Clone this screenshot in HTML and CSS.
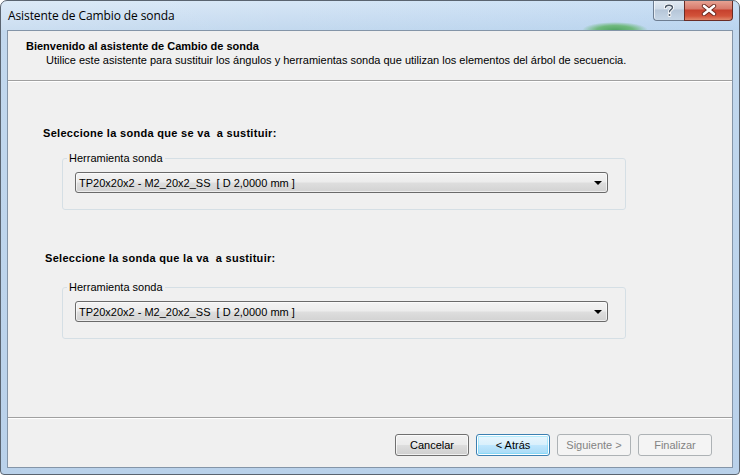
FILE: index.html
```html
<!DOCTYPE html>
<html lang="es">
<head>
<meta charset="utf-8">
<title>Asistente de Cambio de sonda</title>
<link rel="stylesheet" href="styles.css">
</head>
<body>
<div class="window">
  <div class="titlebar">
    <div class="title">Asistente de Cambio de sonda</div>
    <div class="hill"></div>
    <div class="caption-buttons">
      <div class="cap-btn help">
        <svg width="12" height="14" viewBox="0 0 12 14">
          <path d="M2.5 4.5 C2.5 1.5 9.5 1.5 9.5 4.5 C9.5 6.5 6.5 6.8 6.5 8.8" fill="none" stroke="#ffffff" stroke-width="3.2" stroke-linecap="round"/>
          <path d="M2.5 4.5 C2.5 1.5 9.5 1.5 9.5 4.5 C9.5 6.5 6.5 6.8 6.5 8.8" fill="none" stroke="#4b5867" stroke-width="1.4" stroke-linecap="round"/>
          <circle cx="6.5" cy="12" r="1.9" fill="#ffffff"/>
          <circle cx="6.5" cy="12" r="1" fill="#4b5867"/>
        </svg>
      </div>
      <div class="cap-btn close">
        <svg width="16" height="12" viewBox="0 0 16 12">
          <path d="M3 2 L13 10 M13 2 L3 10" stroke="#6b2a20" stroke-width="4.4" stroke-linecap="round"/>
          <path d="M3 2 L13 10 M13 2 L3 10" stroke="#ffffff" stroke-width="2.6" stroke-linecap="round"/>
        </svg>
      </div>
    </div>
  </div>
  <div class="client">
    <div class="header">
      <div class="header-title">Bienvenido al asistente de Cambio de sonda</div>
      <div class="header-sub">Utilice este asistente para sustituir los ángulos y herramientas sonda que utilizan los elementos del árbol de secuencia.</div>
    </div>
    <div class="separator"></div>
    <div class="body">
      <div class="prompt prompt-1">Seleccione la sonda que se va &nbsp;a sustituir:</div>
      <fieldset class="group group-1">
        <legend>Herramienta sonda</legend>
        <div class="combo">
          <span class="combo-text">TP20x20x2 - M2_20x2_SS&nbsp; [ D 2,0000 mm ]</span>
          <span class="combo-arrow"></span>
        </div>
      </fieldset>
      <div class="prompt prompt-2">Seleccione la sonda que la va &nbsp;a sustituir:</div>
      <fieldset class="group group-2">
        <legend>Herramienta sonda</legend>
        <div class="combo">
          <span class="combo-text">TP20x20x2 - M2_20x2_SS&nbsp; [ D 2,0000 mm ]</span>
          <span class="combo-arrow"></span>
        </div>
      </fieldset>
    </div>
    <div class="separator"></div>
    <div class="footer">
      <button class="btn">Cancelar</button>
      <button class="btn default">&lt; Atrás</button>
      <button class="btn" disabled>Siguiente &gt;</button>
      <button class="btn" disabled>Finalizar</button>
    </div>
  </div>
</div>
</body>
</html>
```

FILE: styles.css
```css
* { box-sizing: border-box; }
html, body {
  margin: 0;
  padding: 0;
  width: 740px;
  height: 475px;
  background: #ffffff;
  overflow: hidden;
}
body {
  font-family: "Liberation Sans", Arial, sans-serif;
  font-size: 11px;
  color: #000000;
}
.window {
  width: 740px;
  height: 475px;
  border: 1px solid #5a6470;
  border-radius: 7px 7px 4px 4px;
  background: linear-gradient(to bottom, #d6e6f6 0px, #c2d8ee 30px, #b9d1ea 100%);
  display: flex;
  flex-direction: column;
  overflow: hidden;
}
.titlebar {
  height: 29px;
  display: flex;
  align-items: flex-start;
  padding-left: 7px;
  background: linear-gradient(to right, rgba(255,255,255,0.15) 0%, rgba(255,255,255,0) 40%, rgba(160,200,240,0.25) 100%);
}
.title {
  font-family: "Open Sans", "Noto Sans", sans-serif;
  font-size: 12px;
  line-height: 16px;
  margin-top: 7px;
  color: #000000;
  letter-spacing: -0.1px;
}
.hill {
  width: 66px;
  height: 8px;
  margin: 21px 5px 0 auto;
  align-self: flex-start;
  border-radius: 50% 50% 0 0 / 100% 100% 0 0;
  background: radial-gradient(ellipse 50% 100% at 50% 100%, #3f9e4c 0%, #62b46a 55%, rgba(140,200,160,0) 100%);
  opacity: 0.85;
}
.caption-buttons {
  display: flex;
  margin-right: 6px;
  margin-top: -1px;
}
.cap-btn {
  height: 21px;
  display: flex;
  align-items: center;
  justify-content: center;
  border: 1px solid #6d7d91;
  border-top: none;
}
.cap-btn.help {
  width: 31px;
  border-radius: 0 0 0 4px;
  border-right: none;
  background: linear-gradient(to bottom, #e4ecf4 0%, #cfdbe8 45%, #b6c6d8 50%, #c6d6e6 100%);
  box-shadow: inset 1px 0 0 rgba(255,255,255,0.6);
}
.cap-btn.close {
  width: 49px;
  border-radius: 0 0 4px 0;
  border-color: #6a2c25;
  background: linear-gradient(to bottom, #e8a798 0%, #d7796a 45%, #c6402d 50%, #d2533a 80%, #e0876a 100%);
}
.client {
  flex: 1;
  margin: 0 6px 6px 6px;
  border: 1px solid #8495a8;
  background: #f0f0f0;
  display: flex;
  flex-direction: column;
}
.header {
  height: 49px;
  padding: 8px 0 0 18px;
  line-height: 14px;
}
.header-title {
  font-weight: bold;
}
.header-sub {
  padding-left: 20px;
}
.separator {
  height: 2px;
  border-top: 1px solid #a0a0a0;
  border-bottom: 1px solid #ffffff;
}
.body {
  flex: 1;
  display: flex;
  flex-direction: column;
  align-items: flex-start;
  line-height: 14px;
}
.prompt {
  font-weight: bold;
  letter-spacing: 0.3px;
}
.prompt-1 {
  margin: 44px 0 0 35px;
}
.prompt-2 {
  margin: 41px 0 0 37px;
}
.group {
  margin: 11px 0 0 54px;
  width: 564px;
  border: 1px solid #d5dfe5;
  border-radius: 3px;
  padding: 0 17px 16px 12px;
  min-width: 0;
}
.group-2 {
  margin-top: 15px;
}
.group legend {
  padding: 0 2px;
  margin-left: -8px;
  line-height: 14px;
}
.combo {
  margin-top: 7px;
  height: 21px;
  width: 100%;
  border: 1px solid #6a6a6a;
  border-radius: 3px;
  background: linear-gradient(to bottom, #f3f3f3 0%, #ececec 48%, #dedede 52%, #d2d2d2 100%);
  display: flex;
  align-items: center;
  justify-content: space-between;
  padding: 0 5px 0 3px;
  box-shadow: inset 0 0 0 1px rgba(255,255,255,0.6);
}
.combo-text {
  line-height: 14px;
}
.combo-arrow {
  width: 0;
  height: 0;
  border-left: 4px solid transparent;
  border-right: 4px solid transparent;
  border-top: 4px solid #000000;
  margin-top: 1px;
}
.footer {
  height: 48px;
  display: flex;
  justify-content: flex-end;
  align-items: flex-start;
  gap: 7px;
  padding: 15px 20px 0 0;
}
.btn {
  width: 74px;
  height: 22px;
  font-family: "Liberation Sans", Arial, sans-serif;
  font-size: 11px;
  color: #000000;
  border: 1px solid #707070;
  border-radius: 3px;
  background: linear-gradient(to bottom, #f2f2f2 0%, #ebebeb 48%, #dddddd 52%, #cfcfcf 100%);
  box-shadow: inset 0 0 0 1px rgba(255,255,255,0.7);
  padding: 0;
  margin: 0;
}
.btn.default {
  border-color: #3c7fb1;
  background: linear-gradient(to bottom, #eaf6fd 0%, #d9f0fc 48%, #bee6fd 52%, #a7d9f5 100%);
  box-shadow: inset 0 0 0 1px #ffffff, inset 0 0 0 2px rgba(72,216,251,0.35);
}
.btn:disabled {
  color: #838383;
  border-color: #adb2b5;
  background: #f4f4f4;
  box-shadow: none;
}
```
